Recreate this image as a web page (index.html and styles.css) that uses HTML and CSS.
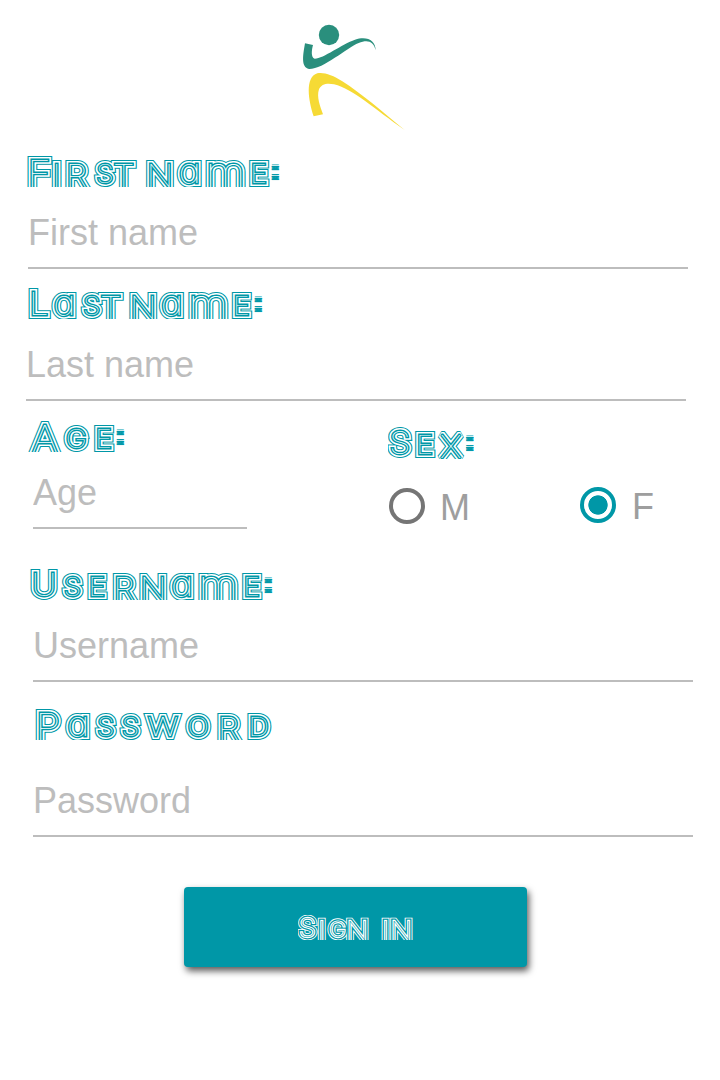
FILE: index.html
```html
<!DOCTYPE html>
<html lang="en">
<head>
<meta charset="utf-8">
<title>Sign in</title>
<link rel="stylesheet" href="styles.css">
</head>
<body>
<form class="form">
  <svg class="logo" viewBox="0 0 375 360" aria-hidden="true">
    <circle class="green" cx="117" cy="60" r="30.5"/>
    <path class="green" d="M45 85L69 90C65 105 62 127 74 131C98 132 156 87 195 74C231 62 257 76 257 106C251 78 232 73 206 84C169 99 100 163 57 162C32 157 39 120 45 85Z"/>
    <path class="yellow" d="M71 304L99 298C91 276 79 245 87 223C93 207 112 203 132 208C190 223 253 282 344 345C278 291 214 235 157 199C128 180 101 171 82 175C44 187 55 256 71 304Z"/>
  </svg>

  <svg class="title first" width="262" height="31" viewBox="0 0 238.2 31" preserveAspectRatio="none"><defs>
    <pattern id="bars" width="10" height="2.5" patternUnits="userSpaceOnUse"><rect class="bar" width="10" height="1.4"/></pattern>
    <text id="t1"><tspan class="big open" x="11.9" y="31">F</tspan><tspan class="open" x="27.7" y="31">i</tspan><tspan class="open" x="45.9" y="31">r</tspan><tspan x="71.8" y="27">s</tspan><tspan class="open" x="92.5" y="31">t</tspan> <tspan class="open" x="121.8" y="31">n</tspan><tspan class="round" x="148.8" y="27">a</tspan><tspan class="arch" x="181.4" y="31">m</tspan><tspan x="211.5" y="27">e</tspan><tspan class="colon" x="226.6" y="23.3">:</tspan></text></defs>
    <use class="outer" href="#t1"/><use class="gap" href="#t1"/><use class="inner" href="#t1"/></svg>
  <input class="field" placeholder="First name">

  <svg class="title last" width="262" height="31" viewBox="0 0 238.2 31" preserveAspectRatio="none"><defs><text id="t2"><tspan class="tall" x="11.6" y="27">L</tspan><tspan class="round" x="35" y="27">a</tspan><tspan x="59.7" y="27">s</tspan><tspan class="open" x="80.7" y="31">t</tspan> <tspan class="open" x="106.6" y="31">n</tspan><tspan class="round" x="132.7" y="27">a</tspan><tspan class="arch" x="165.7" y="31">m</tspan><tspan x="195.9" y="27">e</tspan><tspan class="colon" x="211.2" y="23.3">:</tspan></text></defs>
    <use class="outer" href="#t2"/><use class="gap" href="#t2"/><use class="inner" href="#t2"/></svg>
  <input class="field field-last" placeholder="Last name">

  <div class="pair">
    <div class="age">
      <svg class="title" width="110" height="31" viewBox="0 0 100 31" preserveAspectRatio="none"><defs><text id="t3"><tspan class="big open" x="17.1" y="31">A</tspan><tspan x="45.7" y="27">g</tspan><tspan x="70.6" y="27">e</tspan><tspan class="colon" x="85.6" y="23.3">:</tspan></text></defs>
        <use class="outer" href="#t3"/><use class="gap" href="#t3"/><use class="inner" href="#t3"/></svg>
      <input class="field field-age" placeholder="Age">
    </div>
    <div class="sex">
      <svg class="title" width="100" height="32" viewBox="0 0 90.9 32" preserveAspectRatio="none"><defs><text id="t4"><tspan class="tall" x="10.9" y="27">S</tspan><tspan x="33.2" y="27">e</tspan><tspan class="open" x="57.1" y="31">x</tspan><tspan class="colon" x="74.3" y="23.3">:</tspan></text></defs>
        <use class="outer" href="#t4"/><use class="gap" href="#t4"/><use class="inner" href="#t4"/></svg>
      <div class="choices">
        <label class="choice male"><span class="radio"></span><span class="letter">M</span></label>
        <label class="choice female"><span class="radio checked"></span><span class="letter">F</span></label>
      </div>
    </div>
  </div>

  <svg class="title username" width="262" height="31" viewBox="0 0 238.2 31" preserveAspectRatio="none"><defs><text id="t5"><tspan class="tall" x="16.4" y="27">U</tspan><tspan x="42.3" y="27">s</tspan><tspan x="64.5" y="27">e</tspan><tspan class="open" x="89.1" y="31">r</tspan><tspan class="open" x="115.5" y="31">n</tspan><tspan class="round" x="142" y="27">a</tspan><tspan class="arch" x="174.8" y="31">m</tspan><tspan x="205" y="27">e</tspan><tspan class="colon" x="220.2" y="23.3">:</tspan></text></defs>
    <use class="outer" href="#t5"/><use class="gap" href="#t5"/><use class="inner" href="#t5"/></svg>
  <input class="field field-user" placeholder="Username">

  <svg class="title password" width="262" height="31" viewBox="0 0 238.2 31" preserveAspectRatio="none"><defs><text id="t6"><tspan class="big open" x="19.8" y="31">P</tspan><tspan class="round" x="47.5" y="27">a</tspan><tspan x="72.5" y="27">s</tspan><tspan x="95" y="27">s</tspan><tspan class="arch w" x="124.5" y="27">w</tspan><tspan x="156.5" y="27">o</tspan><tspan class="open" x="184.1" y="31">r</tspan><tspan x="211.5" y="27">d</tspan></text></defs>
    <use class="outer" href="#t6"/><use class="gap" href="#t6"/><use class="inner" href="#t6"/></svg>
  <input class="field field-pass" placeholder="Password">

  <button class="submit" type="button">
    <svg class="title light" width="116" height="25" viewBox="0 0 131.8 31" preserveAspectRatio="none"><defs><text id="t7"><tspan class="tall" x="10.8" y="27">S</tspan><tspan class="open" x="26.9" y="31">i</tspan><tspan x="45.1" y="27">g</tspan><tspan class="open" x="70.9" y="31">n</tspan> <tspan class="open" x="99.5" y="31">i</tspan><tspan class="open" x="117.3" y="31">n</tspan></text></defs>
      <use class="outer" href="#t7"/><use class="gap" href="#t7"/><use class="inner" href="#t7"/></svg>
  </button>
</form>
</body>
</html>
```
FILE: styles.css
```css
* { box-sizing: border-box; }
body { margin: 0; background: #fff; font-family: "Liberation Sans", Arial, sans-serif; }
.form { width: 720px; height: 1080px; padding: 15px 0 0 26px; }
.logo { display: block; width: 125px; height: 120px; margin-left: 264px; }
.green { fill: #2a8f7d; }
.yellow { fill: #f6da35; }

/* Multi-line display lettering: thin glyphs with nested strokes */
.title { --ink: #0097a7; --paper: #fff; display: block; overflow: hidden; }
.title text { font: 100 26px Inter, sans-serif; font-feature-settings: "cv11"; text-anchor: middle; text-transform: uppercase; paint-order: stroke; stroke-miterlimit: 2; }
.title .open { font-size: 31.6px; }
.title .tall { font-size: 31.6px; }
.title .big { font-size: 37px; }
.title .round { font-size: 35px; text-transform: none; }
.title .arch { font-size: 42px; text-transform: none; }
.title .w { font-size: 35px; }
.title .colon { font: 700 26px "Liberation Sans", Arial, sans-serif; fill: url(#bars); stroke: url(#bars); stroke-width: 2.6px; }
.outer { fill: var(--ink); stroke: var(--ink); stroke-width: 8px; }
.gap { fill: var(--paper); stroke: var(--paper); stroke-width: 5.9px; }
.inner { fill: var(--paper); stroke: var(--ink); stroke-width: 2.8px; }
.bar { fill: #0097a7; }
.light { --ink: #fff; --paper: #0097a7; }
.first { margin-top: 21px; }
.last { margin-top: 19px; }
.username { margin-top: 40px; }
.password { margin-top: 27px; }

.field { display: block; width: 660px; height: 59px; margin: 23px 0 0 2px; padding: 0 0 11px; border: 0; border-bottom: 2px solid #bdbdbd; border-radius: 0; background: none; font: 36px/44px "Liberation Sans", Arial, sans-serif; outline: 0; }
.field::placeholder { color: #bdbdbd; opacity: 1; }
.field-last { margin-left: 0; }
.field-age { width: 214px; margin: 18px 0 0 7px; }
.field-user { margin-left: 7px; }
.field-pass { margin: 38px 0 0 7px; }

.pair { display: flex; margin-top: 20px; }
.age { width: 362px; }
.sex { padding-top: 6px; }
.choices { display: flex; margin-top: 28px; }
.choice { display: flex; align-items: center; height: 36px; font-size: 36px; color: #9e9e9e; }
.male { width: 191px; gap: 15px; margin-top: 1px; padding-left: 1px; }
.female { gap: 16px; padding-left: 1px; }
.letter { padding-top: 3px; }
.radio { width: 36px; height: 36px; border: 4px solid #757575; border-radius: 50%; }
.checked { border-color: #0097a7; background: radial-gradient(circle, #0097a7 9.3px, #fff 10px); }

.submit { display: flex; align-items: center; justify-content: center; width: 343px; height: 80px; margin: 50px 0 0 158px; padding: 0; border: 0; border-radius: 4px; background: #0097a7; box-shadow: 2px 4px 7px rgba(0,0,0,.65); }
```
